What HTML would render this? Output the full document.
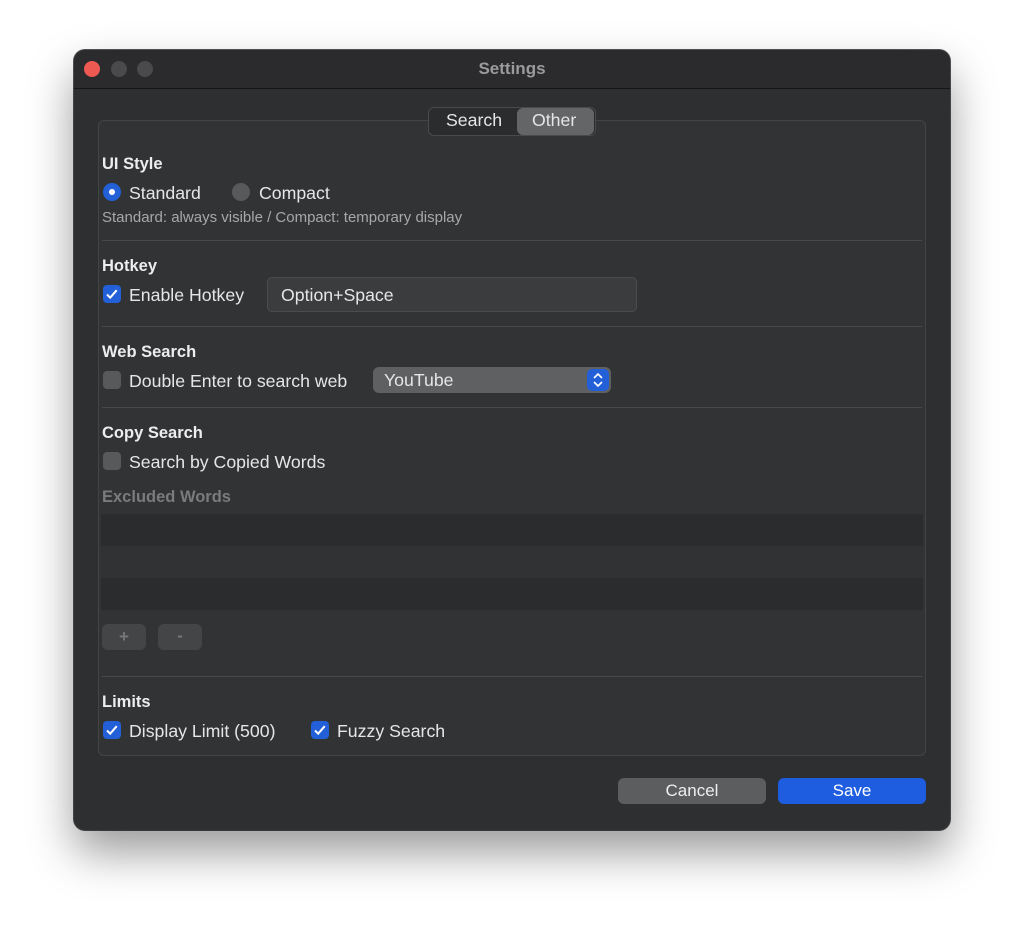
<!DOCTYPE html>
<html><head><style>
body{margin:0;width:1024px;height:928px;background:#fff;font-family:"Liberation Sans",sans-serif;position:relative;overflow:hidden}
.win{position:absolute;left:74px;top:50px;width:876px;height:780px;background:#2e2f31;border-radius:11px;box-shadow:0 22px 45px rgba(0,0,0,.4),0 0 0 1px #555;overflow:hidden}
.tb{position:absolute;left:0;top:0;width:100%;height:38px;background:#2b2b2d;border-bottom:1px solid #151515}
.dot{position:absolute;top:11px;width:16px;height:16px;border-radius:50%}
.t{position:absolute;color:#e6e6e6;font-size:17.7px;white-space:nowrap}
.h{font-weight:bold;font-size:16.5px;color:#ededed}
.box{position:absolute;left:24px;top:70px;width:826px;height:634px;border:1px solid #444;border-radius:6px;background:#313335}
.sep{position:absolute;left:28px;width:820px;height:1px;background:#46484a}
.cb{position:absolute;width:18px;height:18px;border-radius:4px}
.on{background:#2360d8}
.off{background:#58595b}
.btn{position:absolute;border-radius:6px;color:#eee;font-size:17px;text-align:center}
</style></head><body>
<div class="win">
<div class="tb">
<div class="dot" style="left:10px;background:#ee5a52"></div>
<div class="dot" style="left:37px;background:#4a4a4c"></div>
<div class="dot" style="left:63px;background:#4a4a4c"></div>
<div class="t" style="left:0;width:876px;text-align:center;top:9px;color:#9b9b9d;font-weight:bold;font-size:17px">Settings</div>
</div>
<div class="box"></div>
<div style="position:absolute;left:354px;top:57px;width:166px;height:27px;border-radius:6px;background:#2b2c2e;border:1px solid #4a4a4c"></div>
<div style="position:absolute;left:443px;top:58px;width:77px;height:27px;border-radius:6px;background:#646567"></div>
<div class="t" style="left:372px;top:60px">Search</div>
<div class="t" style="left:458px;top:60px">Other</div>

<div class="t h" style="left:28px;top:105px">UI Style</div>
<div style="position:absolute;left:29px;top:133px;width:18px;height:18px;border-radius:50%;background:#2360d8"><div style="position:absolute;left:6px;top:6px;width:6px;height:6px;border-radius:50%;background:#fff"></div></div>
<div class="t" style="left:55px;top:133px">Standard</div>
<div style="position:absolute;left:158px;top:133px;width:18px;height:18px;border-radius:50%;background:#58595b"></div>
<div class="t" style="left:185px;top:133px">Compact</div>
<div class="t" style="left:28px;top:159px;font-size:15px;color:#a8a8aa">Standard: always visible / Compact: temporary display</div>
<div class="sep" style="top:190px"></div>

<div class="t h" style="left:28px;top:207px">Hotkey</div>
<div class="cb on" style="left:29px;top:235px"><svg width="18" height="18"><path d="M4 9.5l3.2 3.2 6.5-7.5" stroke="#fff" stroke-width="2" fill="none"/></svg></div>
<div class="t" style="left:55px;top:235px">Enable Hotkey</div>
<div style="position:absolute;left:193px;top:227px;width:368px;height:33px;border-radius:5px;background:#3b3c3e;border:1px solid #4b4c4e"></div>
<div class="t" style="left:207px;top:235px">Option+Space</div>
<div class="sep" style="top:276px"></div>

<div class="t h" style="left:28px;top:293px">Web Search</div>
<div class="cb off" style="left:29px;top:321px"></div>
<div class="t" style="left:55px;top:321px">Double Enter to search web</div>
<div style="position:absolute;left:299px;top:317px;width:238px;height:26px;border-radius:6px;background:#5f6062"></div>
<div class="t" style="left:310px;top:320px">YouTube</div>
<div style="position:absolute;left:513px;top:319px;width:22px;height:22px;border-radius:5px;background:#2360d8"><svg width="22" height="22"><path d="M7 9l4-4 4 4M7 13l4 4 4-4" stroke="#fff" stroke-width="1.6" fill="none"/></svg></div>
<div class="sep" style="top:357px"></div>

<div class="t h" style="left:28px;top:374px">Copy Search</div>
<div class="cb off" style="left:29px;top:402px"></div>
<div class="t" style="left:55px;top:402px">Search by Copied Words</div>
<div class="t h" style="left:28px;top:438px;color:#7a7b7d">Excluded Words</div>
<div style="position:absolute;left:27px;top:464px;width:822px;height:32px;background:#2b2c2e"></div>
<div style="position:absolute;left:27px;top:496px;width:822px;height:32px;background:#303234"></div>
<div style="position:absolute;left:27px;top:528px;width:822px;height:32px;background:#2b2c2e"></div>
<div class="btn" style="left:28px;top:574px;width:44px;height:26px;background:#444547;color:#777;line-height:26px;font-weight:bold">+</div>
<div class="btn" style="left:84px;top:574px;width:44px;height:26px;background:#444547;color:#777;line-height:24px;font-weight:bold">-</div>
<div class="sep" style="top:626px"></div>

<div class="t h" style="left:28px;top:643px">Limits</div>
<div class="cb on" style="left:29px;top:671px"><svg width="18" height="18"><path d="M4 9.5l3.2 3.2 6.5-7.5" stroke="#fff" stroke-width="2" fill="none"/></svg></div>
<div class="t" style="left:55px;top:671px">Display Limit (500)</div>
<div class="cb on" style="left:237px;top:671px"><svg width="18" height="18"><path d="M4 9.5l3.2 3.2 6.5-7.5" stroke="#fff" stroke-width="2" fill="none"/></svg></div>
<div class="t" style="left:263px;top:671px">Fuzzy Search</div>

<div class="btn" style="left:544px;top:728px;width:148px;height:26px;line-height:26px;background:#5c5d5f">Cancel</div>
<div class="btn" style="left:704px;top:728px;width:148px;height:26px;line-height:26px;background:#1e5ce0;color:#fff">Save</div>
</div>
</body></html>
